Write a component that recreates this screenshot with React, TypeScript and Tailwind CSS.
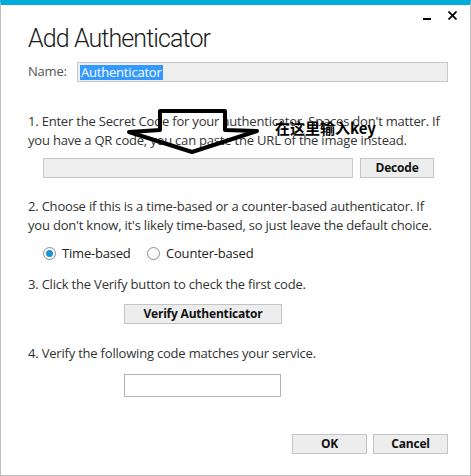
import React, { useState } from 'react';

const font = { fontFamily: '"Open Sans", "Noto Sans", sans-serif' };

function Button({ label, className }: { label: string; className: string }) {
  return (
    <button
      className={`h-[20px] bg-[#ededed] border border-[#c4c4c4] text-[12px] font-bold text-[#111] leading-none tracking-[-0.2px] ${className}`}
    >
      {label}
    </button>
  );
}

function Radio({ checked, label, className }: { checked: boolean; label: string; className?: string }) {
  return (
    <label className={`flex items-center gap-[6px] ${className ?? ''}`}>
      <span className="w-[13px] h-[13px] rounded-full border border-[#8c8c8c] bg-white flex items-center justify-center">
        {checked && <span className="w-[7px] h-[7px] rounded-full bg-[#1a93d9]" />}
      </span>
      <span className="text-[13px] text-[#222] leading-none tracking-[-0.2px]">{label}</span>
    </label>
  );
}

export default function App() {
  const [mode, setMode] = useState('time');

  return (
    <div
      style={font}
      className="relative w-[471px] h-[476px] bg-white border-x border-b border-[#bdbdbd] border-t-[5px] border-t-[#01acda] flex flex-col pl-[27px] pr-[22px] text-[#333] overflow-hidden"
    >
      {/* caption buttons */}
      <div className="mt-[6px] h-[9px] flex justify-end items-end gap-[17px] -mr-[9px]">
        <span className="w-[8px] h-[2px] bg-black" />
        <svg width="9" height="9" viewBox="0 0 9 9" className="block">
          <path d="M0.5 0.5 L8.5 8.5 M8.5 0.5 L0.5 8.5" stroke="#000" strokeWidth="1.7" />
        </svg>
      </div>

      <h1
        className="mt-[6px] text-[25px] leading-[25px] font-light text-[#1b1b1b] tracking-[-0.9px]"
        style={{ fontFamily: 'Roboto, "Open Sans", sans-serif' }}
      >
        Add Authenticator
      </h1>

      <div className="mt-[11px] flex items-center h-[20px]">
        <span className="w-[49px] text-[13px] text-[#555] tracking-[-0.2px]">Name:</span>
        <div className="flex-1 h-[20px] bg-[#eeeeee] border border-[#c8c8c8] flex items-center pl-[2px]">
          <span className="bg-[#3399ff] text-white text-[13px] leading-[15px] px-[1px] tracking-[-0.2px]">Authenticator</span>
        </div>
      </div>

      <p className="mt-[30px] text-[13px] leading-[19px] whitespace-nowrap tracking-[-0.2px]">
        1. Enter the Secret Code for your authenticator. Spaces don't matter. If
        <br />
        you have a QR code, you can paste the URL of the image instead.
      </p>

      <div className="mt-[8px] ml-[15px] flex gap-[7px]">
        <div className="w-[310px] h-[20px] bg-[#eeeeee] border border-[#c8c8c8]" />
        <Button label="Decode" className="w-[74px]" />
      </div>

      <p className="mt-[19px] text-[13px] leading-[19px] whitespace-nowrap tracking-[-0.2px]">
        2. Choose if this is a time-based or a counter-based authenticator. If
        <br />
        you don't know, it's likely time-based, so just leave the default choice.
      </p>

      <div className="mt-[10px] ml-[15px] h-[16px] flex items-center" onClick={() => setMode(mode)}>
        <Radio checked={mode === 'time'} label="Time-based" className="w-[104px]" />
        <Radio checked={mode === 'counter'} label="Counter-based" />
      </div>

      <p className="mt-[14px] text-[13px] leading-[19px] whitespace-nowrap tracking-[-0.2px]">
        3. Click the Verify button to check the first code.
      </p>

      <Button label="Verify Authenticator" className="mt-[10px] ml-[96px] w-[158px]" />

      <p className="mt-[20px] text-[13px] leading-[19px] whitespace-nowrap tracking-[-0.2px]">
        4. Verify the following code matches your service.
      </p>

      <div className="mt-[11px] ml-[96px] w-[157px] h-[23px] bg-white border border-[#b4b4b4]" />

      <div className="mt-[37px] flex justify-end gap-[6px]">
        <Button label="OK" className="w-[75px]" />
        <Button label="Cancel" className="w-[75px]" />
      </div>

      {/* annotation overlay */}
      <svg
        className="absolute left-[-1px] top-[-5px] pointer-events-none"
        width="471"
        height="476"
        viewBox="0 0 471 476"
      >
        <polygon
          points="160,111 225,111 225,130 257,131 192,152 129,132 160,130"
          fill="none"
          stroke="#000"
          strokeWidth="4"
          strokeLinejoin="round"
        />
      </svg>
      <span
        className="absolute left-[274px] top-[115px] text-[15px] font-bold text-black leading-none"
        style={{ fontFamily: '"Noto Sans CJK SC", "Noto Sans", sans-serif' }}
      >
        在这里输入key
      </span>
    </div>
  );
}
